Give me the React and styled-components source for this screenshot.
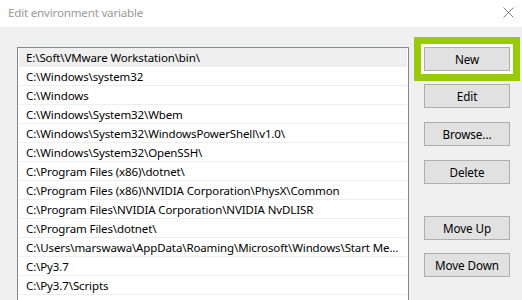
import React from "react";
import styled, { createGlobalStyle, css } from "styled-components";

const Global = createGlobalStyle`
  html, body { margin: 0; padding: 0; background: #f0f0f0; }
  body { font-family: "Noto Sans", "Liberation Sans", sans-serif; font-size: 12px; }
`;

const Window = styled.div`
  width: 522px;
  height: 300px;
  overflow: hidden;
  display: flex;
  flex-direction: column;
  background: #f0f0f0;
`;

const TitleBar = styled.div`
  height: 27px;
  flex: none;
  background: #ffffff;
  display: flex;
  align-items: center;
  justify-content: space-between;
  padding: 0 8px 3px 8px;
  box-sizing: border-box;
`;

const Title = styled.span`
  color: #999999;
  font-size: 11.6px;
  letter-spacing: -0.2px;
`;

const CloseIcon = styled.svg`
  width: 11px;
  height: 11px;
`;

const Body = styled.div`
  flex: 1;
  display: flex;
  gap: 15px;
  padding: 20px 12px 0 17px;
  align-items: flex-start;
`;

const ListBox = styled.div`
  width: 392px;
  min-height: 280px;
  flex: none;
  background: #ffffff;
  border: 1px solid #828790;
  padding: 0 1px;
  box-sizing: border-box;
`;

const Row = styled.div`
  height: 19px;
  box-sizing: border-box;
  padding-left: 7px;
  display: flex;
  align-items: center;
  color: #000;
  font-size: 11.5px;
  letter-spacing: -0.12px;
  white-space: nowrap;
  overflow: hidden;
  border-bottom: 1px solid #efefef;
  ${(p) =>
    p.$selected &&
    css`
      background: #efefef;
    `}
`;

const Buttons = styled.div`
  display: flex;
  flex-direction: column;
  width: 86px;
`;

const Button = styled.button`
  width: 86px;
  height: 24px;
  box-sizing: border-box;
  background: #e1e1e1;
  border: 1px solid #adadad;
  font-family: inherit;
  font-size: 11.7px;
  letter-spacing: -0.1px;
  color: #000;
  padding: 0;
  margin-top: ${(p) => p.$gap || 0}px;
  ${(p) =>
    p.$highlight &&
    css`
      box-shadow: 0 0 0 3px #ffffff, 0 0 0 10px #99cc00;
    `}
`;

const rows = [
  "E:\\Soft\\VMware Workstation\\bin\\",
  "C:\\Windows\\system32",
  "C:\\Windows",
  "C:\\Windows\\System32\\Wbem",
  "C:\\Windows\\System32\\WindowsPowerShell\\v1.0\\",
  "C:\\Windows\\System32\\OpenSSH\\",
  "C:\\Program Files (x86)\\dotnet\\",
  "C:\\Program Files (x86)\\NVIDIA Corporation\\PhysX\\Common",
  "C:\\Program Files\\NVIDIA Corporation\\NVIDIA NvDLISR",
  "C:\\Program Files\\dotnet\\",
  "C:\\Users\\marswawa\\AppData\\Roaming\\Microsoft\\Windows\\Start Me...",
  "C:\\Py3.7",
  "C:\\Py3.7\\Scripts",
];

export default function App() {
  return (
    <Window>
      <Global />
      <TitleBar>
        <Title>Edit environment variable</Title>
        <CloseIcon viewBox="0 0 11 11">
          <path d="M0.5 0.5 L10.5 10.5 M10.5 0.5 L0.5 10.5" stroke="#808080" strokeWidth="1" fill="none" />
        </CloseIcon>
      </TitleBar>
      <Body>
        <ListBox>
          {rows.map((r, i) => (
            <Row key={i} $selected={i === 0}>
              {r}
            </Row>
          ))}
        </ListBox>
        <Buttons>
          <Button $highlight>New</Button>
          <Button $gap={13}>Edit</Button>
          <Button $gap={14}>Browse...</Button>
          <Button $gap={14}>Delete</Button>
          <Button $gap={32}>Move Up</Button>
          <Button $gap={13}>Move Down</Button>
        </Buttons>
      </Body>
    </Window>
  );
}
